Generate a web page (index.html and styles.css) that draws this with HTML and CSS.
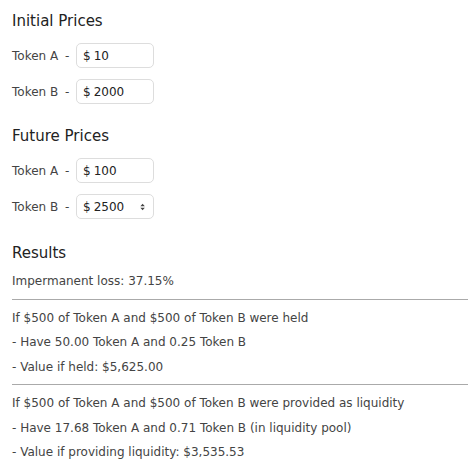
FILE: index.html
```html
<!DOCTYPE html>
<html lang="en">
<head>
    <meta charset="UTF-8">
    <meta name="viewport" content="width=device-width, initial-scale=1.0">
    <title>Impermanent Loss Calculator</title>
    <link rel="stylesheet" href="styles.css">
</head>
<body>
    <div class="section">
        <h2>Initial Prices</h2>
        <div class="row">
            <label>Token A</label><span class="dash">-</span>
            <div class="price"><span>$</span><input type="text" value="10"></div>
        </div>
        <div class="row">
            <label>Token B</label><span class="dash">-</span>
            <div class="price"><span>$</span><input type="text" value="2000"></div>
        </div>
    </div>
    <div class="section">
        <h2>Future Prices</h2>
        <div class="row">
            <label>Token A</label><span class="dash">-</span>
            <div class="price"><span>$</span><input type="text" value="100"></div>
        </div>
        <div class="row">
            <label>Token B</label><span class="dash">-</span>
            <div class="price"><span>$</span><input type="text" value="2500">
                <svg class="spin" width="7" height="10" viewBox="0 0 7 10"><path d="M3.5 0.5 L6.5 4 H0.5 Z M3.5 9.5 L6.5 6 H0.5 Z" fill="#444"/></svg>
            </div>
        </div>
    </div>
    <div class="results">
        <h2>Results</h2>
        <p>Impermanent loss: 37.15%</p>
        <hr>
        <p>If $500 of Token A and $500 of Token B were held</p>
        <p>- Have 50.00 Token A and 0.25 Token B</p>
        <p>- Value if held: $5,625.00</p>
        <hr>
        <p>If $500 of Token A and $500 of Token B were provided as liquidity</p>
        <p>- Have 17.68 Token A and 0.71 Token B (in liquidity pool)</p>
        <p>- Value if providing liquidity: $3,535.53</p>
    </div>
</body>
</html>
```
FILE: styles.css
```css
body {
    margin: 0;
    padding: 0 6px 0 12px;
    font-family: 'DejaVu Sans', sans-serif;
    font-size: 12px;
    color: #444;
    background: #fff;
}
h2 {
    margin: 0;
    font-size: 15px;
    font-weight: 500;
    color: #222;
    line-height: 20px;
}
.section {
    padding-top: 11px;
}
.section h2 {
    margin-bottom: 12px;
}
.row {
    display: flex;
    align-items: center;
    height: 25px;
    margin-bottom: 11px;
}
.row label {
    width: 53px;
}
.dash {
    width: 11px;
}
.price {
    display: flex;
    align-items: center;
    box-sizing: border-box;
    width: 78px;
    height: 25px;
    padding: 0 8px 0 6px;
    border: 1px solid #ddd;
    border-radius: 5px;
}
.price span {
    margin-right: 3px;
    color: #222;
}
.price input {
    border: none;
    outline: none;
    padding: 0;
    width: 100%;
    font: inherit;
    color: #222;
}
.results {
    padding-top: 13px;
}
.results h2 {
    margin-bottom: 6px;
}
.results p {
    margin: 0;
    line-height: 24.5px;
}
hr {
    border: none;
    border-top: 1px solid #aaa;
    margin: 5px 0 6px 0;
}
```
